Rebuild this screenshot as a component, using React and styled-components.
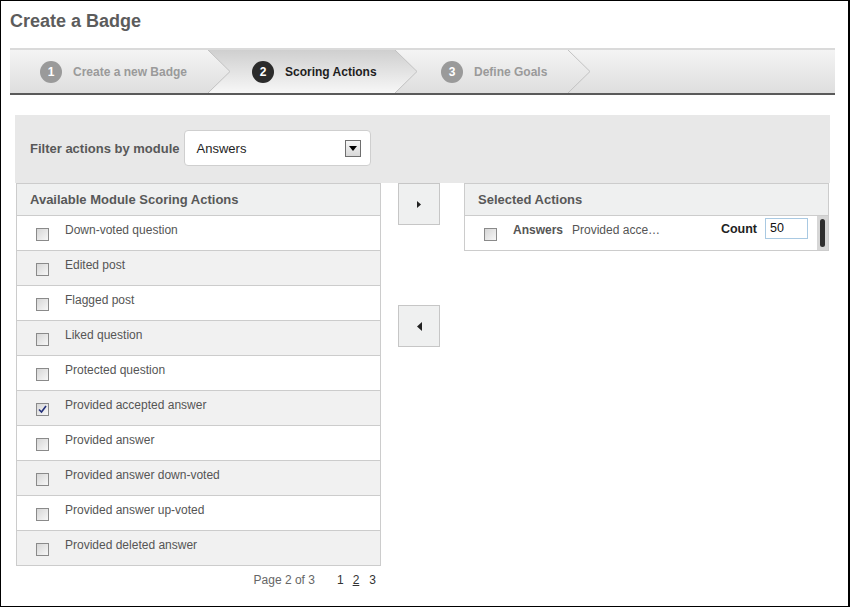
import React from "react";
import styled, { createGlobalStyle } from "styled-components";

const GlobalStyle = createGlobalStyle`
  body {
    margin: 0;
    background: #ffffff;
    font-family: "Liberation Sans", Arial, sans-serif;
  }
`;

const Frame = styled.div`
  box-sizing: border-box;
  width: 850px;
  height: 607px;
  border: 1px solid #000;
  border-right-width: 2px;
  padding-left: 9px;
  overflow: hidden;
`;

const Title = styled.h1`
  margin: 0;
  padding-top: 9px;
  height: 22px;
  line-height: 22px;
  font-size: 18px;
  font-weight: bold;
  color: #5c5c5c;
`;

//wizard
const Wizard = styled.div`
  margin-top: 16px;
  width: 825px;
  height: 43px;
  display: flex;
  border-top: 2px solid #dadada;
  border-bottom: 2px solid #5a5a5a;
  background: linear-gradient(#f4f4f4, #dedede);
`;

const Step = styled.div`
  box-sizing: border-box;
  width: ${p => p.w}px;
  padding-left: ${p => p.pad}px;
  display: flex;
  align-items: center;
  background: ${p =>
    p.active
      ? "linear-gradient(#cfcfcf, #f7f7f7)"
      : "linear-gradient(#f4f4f4, #dedede)"};
`;

const Circle = styled.span`
  width: 22px;
  height: 22px;
  border-radius: 50%;
  background: ${p => (p.active ? "#2b2b2b" : "#9a9a9a")};
  color: #fff;
  font-size: 12px;
  font-weight: bold;
  display: flex;
  align-items: center;
  justify-content: center;
  margin-right: 11px;
`;

const StepLabel = styled.span`
  font-size: 12px;
  font-weight: bold;
  color: ${p => (p.active ? "#1e1e1e" : "#9a9a9a")};
`;

const Filler = styled.div`
  flex: 1;
`;

const Chevron = ({ left, right }) => (
  <svg width="22" height="43" viewBox="0 0 22 43" style={{ display: "block", flexShrink: 0 }}>
    <defs>
      <linearGradient id="gIn" x1="0" y1="0" x2="0" y2="1">
        <stop offset="0" stopColor="#f4f4f4" />
        <stop offset="1" stopColor="#dedede" />
      </linearGradient>
      <linearGradient id="gAct" x1="0" y1="0" x2="0" y2="1">
        <stop offset="0" stopColor="#cfcfcf" />
        <stop offset="1" stopColor="#f7f7f7" />
      </linearGradient>
    </defs>
    <rect x="0" y="0" width="22" height="43" fill={`url(#${right})`} />
    <polygon points="0,0 22,21.5 0,43" fill={`url(#${left})`} />
    <polyline points="0,0 22,21.5 0,43" fill="none" stroke="#c2c2c2" strokeWidth="1" />
  </svg>
);

//filter
const FilterBar = styled.div`
  margin-top: 20px;
  margin-left: 5px;
  width: 815px;
  box-sizing: border-box;
  padding: 15px 0 17px 15px;
  background: #e8e8e8;
  display: flex;
  align-items: center;
`;

const FilterLabel = styled.span`
  font-size: 13px;
  font-weight: bold;
  color: #585858;
  margin-right: 4px;
`;

const Select = styled.div`
  box-sizing: border-box;
  width: 187px;
  height: 36px;
  background: #fff;
  border: 1px solid #cfcfcf;
  border-radius: 4px;
  display: flex;
  align-items: center;
  justify-content: space-between;
  padding: 0 9px 0 12px;
  font-size: 13px;
  color: #1e1e1e;
`;

const DropBtn = styled.span`
  box-sizing: border-box;
  width: 16px;
  height: 17px;
  border: 1px solid #6e6e6e;
  background: linear-gradient(#f6f6f6, #d8d8d8);
  display: flex;
  align-items: center;
  justify-content: center;
  &::after {
    content: "";
    border-left: 4px solid transparent;
    border-right: 4px solid transparent;
    border-top: 5px solid #000;
  }
`;

//lists
const Columns = styled.div`
  display: flex;
  margin-left: 6px;
  align-items: flex-start;
`;

const Panel = styled.div`
  box-sizing: border-box;
  width: 365px;
  border: 1px solid #cccccc;
`;

const PanelHead = styled.div`
  height: 31px;
  line-height: 31px;
  padding-left: 13px;
  background: #eff0f0;
  font-size: 13px;
  font-weight: bold;
  color: #585858;
`;

const Row = styled.div`
  height: 34px;
  border-top: 1px solid #cccccc;
  background: ${p => (p.alt ? "#f1f1f1" : "#ffffff")};
  display: flex;
  align-items: flex-start;
  padding-left: 19px;
  font-size: 12px;
  color: #555;
`;

const Check = styled.span`
  box-sizing: border-box;
  width: 13px;
  height: 13px;
  margin-top: 12px;
  margin-right: 16px;
  flex-shrink: 0;
  border: 1px solid #8a8a8a;
  background: linear-gradient(135deg, #d6d6d6, #f7f7f7);
  display: flex;
  align-items: center;
  justify-content: center;
`;

const RowText = styled.span`
  margin-top: 7px;
`;

const Pager = styled.div`
  display: flex;
  justify-content: flex-end;
  align-items: center;
  margin-top: 7px;
  padding-right: 5px;
  font-size: 12px;
  color: #666;
`;

const PageLink = styled.span`
  color: #333;
  margin-left: ${p => p.gap}px;
  text-decoration: ${p => (p.current ? "underline" : "none")};
`;

const Middle = styled.div`
  width: 83px;
  box-sizing: border-box;
  padding-left: 17px;
  display: flex;
  flex-direction: column;
  gap: 80px;
`;

const MoveBtn = styled.div`
  box-sizing: border-box;
  width: 42px;
  height: 42px;
  border: 1px solid #c6c6c6;
  background: #eff0f0;
  display: flex;
  align-items: center;
  justify-content: center;
`;

const SelRow = styled.div`
  height: 34px;
  border-top: 1px solid #cccccc;
  display: flex;
`;

const SelMain = styled.div`
  flex: 1;
  display: flex;
  align-items: flex-start;
  padding-left: 19px;
  font-size: 12px;
  color: #555;
`;

const Module = styled.span`
  font-weight: bold;
  margin-top: 7px;
  margin-right: 9px;
`;

const CountLabel = styled.span`
  margin-left: auto;
  margin-top: 6px;
  font-size: 12.5px;
  font-weight: bold;
  color: #222;
  margin-right: 8px;
`;

const CountInput = styled.div`
  box-sizing: border-box;
  width: 43px;
  height: 21px;
  margin-top: 2px;
  margin-right: 9px;
  border: 1px solid #a9c9e2;
  padding-left: 4px;
  line-height: 19px;
  color: #111;
  font-size: 12.5px;
`;

const ScrollTrack = styled.div`
  width: 11px;
  background: #d6d6d6;
  display: flex;
  justify-content: center;
  padding-top: 3px;
  box-sizing: border-box;
`;

const Thumb = styled.div`
  width: 5px;
  height: 28px;
  border-radius: 3px;
  background: #2f2f2f;
`;

const actions = [
  "Down-voted question",
  "Edited post",
  "Flagged post",
  "Liked question",
  "Protected question",
  "Provided accepted answer",
  "Provided answer",
  "Provided answer down-voted",
  "Provided answer up-voted",
  "Provided deleted answer"
];

const Tick = () => (
  <svg width="9" height="9" viewBox="0 0 9 9">
    <path d="M1 4.5 L3.5 7 L8 1" fill="none" stroke="#24307a" strokeWidth="1.6" />
  </svg>
);

export default function App() {
  return (
    <Frame>
      <GlobalStyle />
      <Title>Create a Badge</Title>

      <Wizard>
        <Step w={198} pad={30}>
          <Circle>1</Circle>
          <StepLabel>Create a new Badge</StepLabel>
        </Step>
        <Chevron left="gIn" right="gAct" />
        <Step w={165} pad={22} active>
          <Circle active>2</Circle>
          <StepLabel active>Scoring Actions</StepLabel>
        </Step>
        <Chevron left="gAct" right="gIn" />
        <Step w={151} pad={24}>
          <Circle>3</Circle>
          <StepLabel>Define Goals</StepLabel>
        </Step>
        <Chevron left="gIn" right="gIn" />
        <Filler />
      </Wizard>

      <FilterBar>
        <FilterLabel>Filter actions by module</FilterLabel>
        <Select>
          Answers
          <DropBtn />
        </Select>
      </FilterBar>

      <Columns>
        <div>
          <Panel>
            <PanelHead>Available Module Scoring Actions</PanelHead>
            {actions.map((a, i) => (
              <Row key={a} alt={i % 2 === 1}>
                <Check>{a === "Provided accepted answer" && <Tick />}</Check>
                <RowText>{a}</RowText>
              </Row>
            ))}
          </Panel>
          <Pager>
            Page 2 of 3
            <PageLink gap={22}>1</PageLink>
            <PageLink gap={9} current>2</PageLink>
            <PageLink gap={10}>3</PageLink>
          </Pager>
        </div>

        <Middle>
          <MoveBtn>
            <svg width="4" height="7" viewBox="0 0 4 7">
              <polygon points="0,0 4,3.5 0,7" fill="#222" />
            </svg>
          </MoveBtn>
          <MoveBtn>
            <svg width="5" height="9" viewBox="0 0 5 9">
              <polygon points="5,0 0,4.5 5,9" fill="#222" />
            </svg>
          </MoveBtn>
        </Middle>

        <Panel>
          <PanelHead>Selected Actions</PanelHead>
          <SelRow>
            <SelMain>
              <Check />
              <Module>Answers</Module>
              <RowText>Provided acce…</RowText>
              <CountLabel>Count</CountLabel>
              <CountInput>50</CountInput>
            </SelMain>
            <ScrollTrack>
              <Thumb />
            </ScrollTrack>
          </SelRow>
        </Panel>
      </Columns>
    </Frame>
  );
}
